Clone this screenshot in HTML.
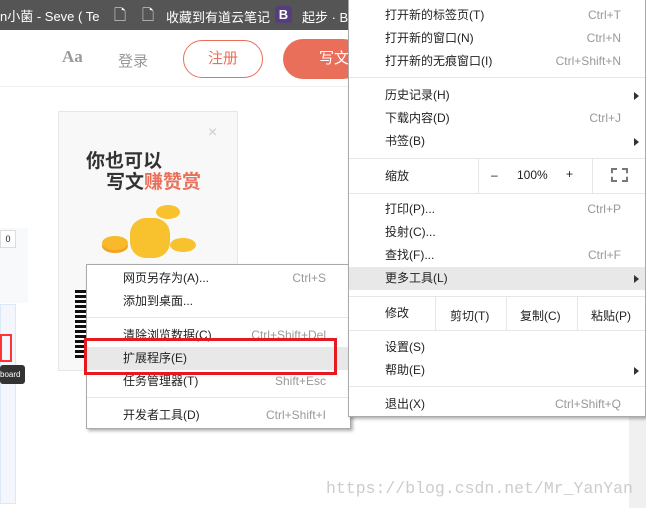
<!DOCTYPE html>
<html><head><meta charset="utf-8"><style>
*{margin:0;padding:0;box-sizing:border-box}
body{width:646px;height:508px;overflow:hidden;background:#fff;position:relative;font-family:"Liberation Sans","Noto Sans CJK SC",sans-serif;font-size:12px;color:#222}
.a{position:absolute}
.top{left:0;top:0;width:646px;height:30px;background:#555;color:#fff;font-size:13px}
.menu{background:#fff;border:1px solid #aaa;box-shadow:2px 2px 3px rgba(0,0,0,.3)}
.it{position:absolute;left:0;right:0;height:23px;line-height:23px}
.it .l{position:absolute;left:36px}
.it .r{position:absolute;right:24px;color:#999}
.sep{position:absolute;left:0;right:0;height:1px;background:#e6e6e6}
.arr{position:absolute;right:6px;top:8px;width:0;height:0;border-left:5px solid #333;border-top:4px solid transparent;border-bottom:4px solid transparent}
</style></head><body>
<div class="a top">
<span class="a" style="left:0;top:6px">n小菌 - Seve ( Te</span>
<span class="a" style="left:114px;top:5px;font-size:15px">🗋</span>
<span class="a" style="left:142px;top:5px;font-size:15px">🗋</span>
<span class="a" style="left:166px;top:7px">收藏到有道云笔记</span>
<span class="a" style="left:275px;top:6px;width:17px;height:17px;background:#563d7c;border-radius:3px;text-align:center;font-weight:bold;line-height:17px">B</span>
<span class="a" style="left:302px;top:7px">起步 · Bo</span>
</div>
<div class="a" style="left:0;top:86px;width:646px;height:1px;background:#eee"></div>
<div class="a" style="left:62px;top:47px;font-family:'Liberation Serif',serif;font-size:17px;color:#999;font-weight:bold">Aa</div>
<div class="a" style="left:118px;top:50px;font-size:15px;color:#999">登录</div>
<div class="a" style="left:183px;top:40px;width:80px;height:38px;border:1px solid #ea6f5a;border-radius:20px;color:#ea6f5a;font-size:15px;text-align:center;line-height:36px">注册</div>
<div class="a" style="left:283px;top:39px;width:80px;height:40px;background:#ea6f5a;border-radius:20px;color:#fff;font-size:15px;line-height:40px;padding-left:36px">写文</div>
<div class="a" style="left:0;top:228px;width:28px;height:75px;background:#f7f9fb"></div>
<div class="a" style="left:0;top:230px;width:16px;height:18px;border:1px solid #ddd;background:#fff;font-size:9px;text-align:center;line-height:16px">0</div>
<div class="a" style="left:0;top:304px;width:16px;height:200px;border:1px solid #dbe8f8;background:#f3f7fd"></div>
<div class="a" style="left:0;top:334px;width:12px;height:28px;border:2px solid #f33"></div>
<div class="a" style="left:0;top:365px;width:25px;height:19px;background:#333;border-radius:3px;color:#fff;font-size:8px;line-height:19px">board</div>
<div class="a" style="left:58px;top:111px;width:180px;height:260px;background:#f8f8f8;border:1px solid #e6e6e6"></div>
<div class="a" style="left:208px;top:124px;color:#ccc;font-size:16px">×</div>
<div class="a" style="left:86px;top:146px;font-size:19px;font-weight:bold;color:#333;font-family:'Noto Sans CJK SC',sans-serif">你也可以</div>
<div class="a" style="left:106px;top:167px;font-size:19px;font-weight:bold;color:#333;font-family:'Noto Sans CJK SC',sans-serif">写文<span style="color:#ea6f5a">赚赞赏</span></div>
<div class="a" style="left:102px;top:236px;width:26px;height:14px;background:#f8b92a;border-radius:50%;box-shadow:0 3px 0 #f3a321"></div>
<div class="a" style="left:130px;top:218px;width:40px;height:40px;background:#f8c22e;border-radius:40%"></div>
<div class="a" style="left:156px;top:205px;width:24px;height:14px;background:#f8c22e;border-radius:50%"></div>
<div class="a" style="left:170px;top:238px;width:26px;height:14px;background:#f8c22e;border-radius:50%"></div>
<div class="a" style="left:75px;top:290px;width:14px;height:68px;background:repeating-linear-gradient(#111 0 3px,#fff 3px 5px)"></div>
<div class="a" style="left:629px;top:416px;width:17px;height:92px;background:#f0f0f0"></div>
<div class="a" style="left:326px;top:479px;font-family:'Liberation Mono',monospace;font-size:16.5px;color:#ccc">https://blog.csdn.net/Mr_YanYan</div>

<div class="a menu" style="left:86px;top:264px;width:265px;height:165px">
<div class="it" style="top:2px"><span class="l">网页另存为(A)...</span><span class="r">Ctrl+S</span></div>
<div class="it" style="top:25px"><span class="l">添加到桌面...</span></div>
<div class="sep" style="top:52px"></div>
<div class="it" style="top:59px"><span class="l">清除浏览数据(C)</span><span class="r">Ctrl+Shift+Del</span></div>
<div class="it" style="top:82px;background:#e8e8e8"><span class="l">扩展程序(E)</span></div>
<div class="it" style="top:105px"><span class="l">任务管理器(T)</span><span class="r">Shift+Esc</span></div>
<div class="sep" style="top:132px"></div>
<div class="it" style="top:139px"><span class="l">开发者工具(D)</span><span class="r">Ctrl+Shift+I</span></div>
</div>
<div class="a" style="left:84px;top:338px;width:253px;height:37px;border:3px solid #e5191f"></div>

<div class="a menu" style="left:348px;top:-1px;width:298px;height:418px">
<div class="it" style="top:4px"><span class="l">打开新的标签页(T)</span><span class="r">Ctrl+T</span></div>
<div class="it" style="top:27px"><span class="l">打开新的窗口(N)</span><span class="r">Ctrl+N</span></div>
<div class="it" style="top:50px"><span class="l">打开新的无痕窗口(I)</span><span class="r">Ctrl+Shift+N</span></div>
<div class="sep" style="top:77px"></div>
<div class="it" style="top:84px"><span class="l">历史记录(H)</span><i class="arr"></i></div>
<div class="it" style="top:107px"><span class="l">下载内容(D)</span><span class="r">Ctrl+J</span></div>
<div class="it" style="top:130px"><span class="l">书签(B)</span><i class="arr"></i></div>
<div class="sep" style="top:158px"></div>
<div class="it" style="top:165px"><span class="l">缩放</span></div>
<div class="a" style="left:129px;top:159px;width:1px;height:34px;background:#e6e6e6"></div>
<div class="a" style="left:243px;top:159px;width:1px;height:34px;background:#e6e6e6"></div>
<div class="a" style="left:142px;top:168px">–</div>
<div class="a" style="left:168px;top:168px">100%</div>
<div class="a" style="left:217px;top:167px">+</div>
<div class="a" style="left:262px;top:168px;width:17px;height:14px;border:2px dashed #777;border-width:2px"></div>
<div class="sep" style="top:193px"></div>
<div class="it" style="top:198px"><span class="l">打印(P)...</span><span class="r">Ctrl+P</span></div>
<div class="it" style="top:221px"><span class="l">投射(C)...</span></div>
<div class="it" style="top:244px"><span class="l">查找(F)...</span><span class="r">Ctrl+F</span></div>
<div class="it" style="top:267px;background:#e8e8e8"><span class="l">更多工具(L)</span><i class="arr"></i></div>
<div class="sep" style="top:296px"></div>
<div class="it" style="top:302px"><span class="l">修改</span></div>
<div class="a" style="left:86px;top:296px;width:1px;height:34px;background:#e6e6e6"></div>
<div class="a" style="left:157px;top:296px;width:1px;height:34px;background:#e6e6e6"></div>
<div class="a" style="left:228px;top:296px;width:1px;height:34px;background:#e6e6e6"></div>
<div class="a" style="left:101px;top:307px">剪切(T)</div>
<div class="a" style="left:171px;top:307px">复制(C)</div>
<div class="a" style="left:242px;top:307px">粘贴(P)</div>
<div class="sep" style="top:330px"></div>
<div class="it" style="top:336px"><span class="l">设置(S)</span></div>
<div class="it" style="top:359px"><span class="l">帮助(E)</span><i class="arr"></i></div>
<div class="sep" style="top:386px"></div>
<div class="it" style="top:393px"><span class="l">退出(X)</span><span class="r">Ctrl+Shift+Q</span></div>
</div>
</body></html>
